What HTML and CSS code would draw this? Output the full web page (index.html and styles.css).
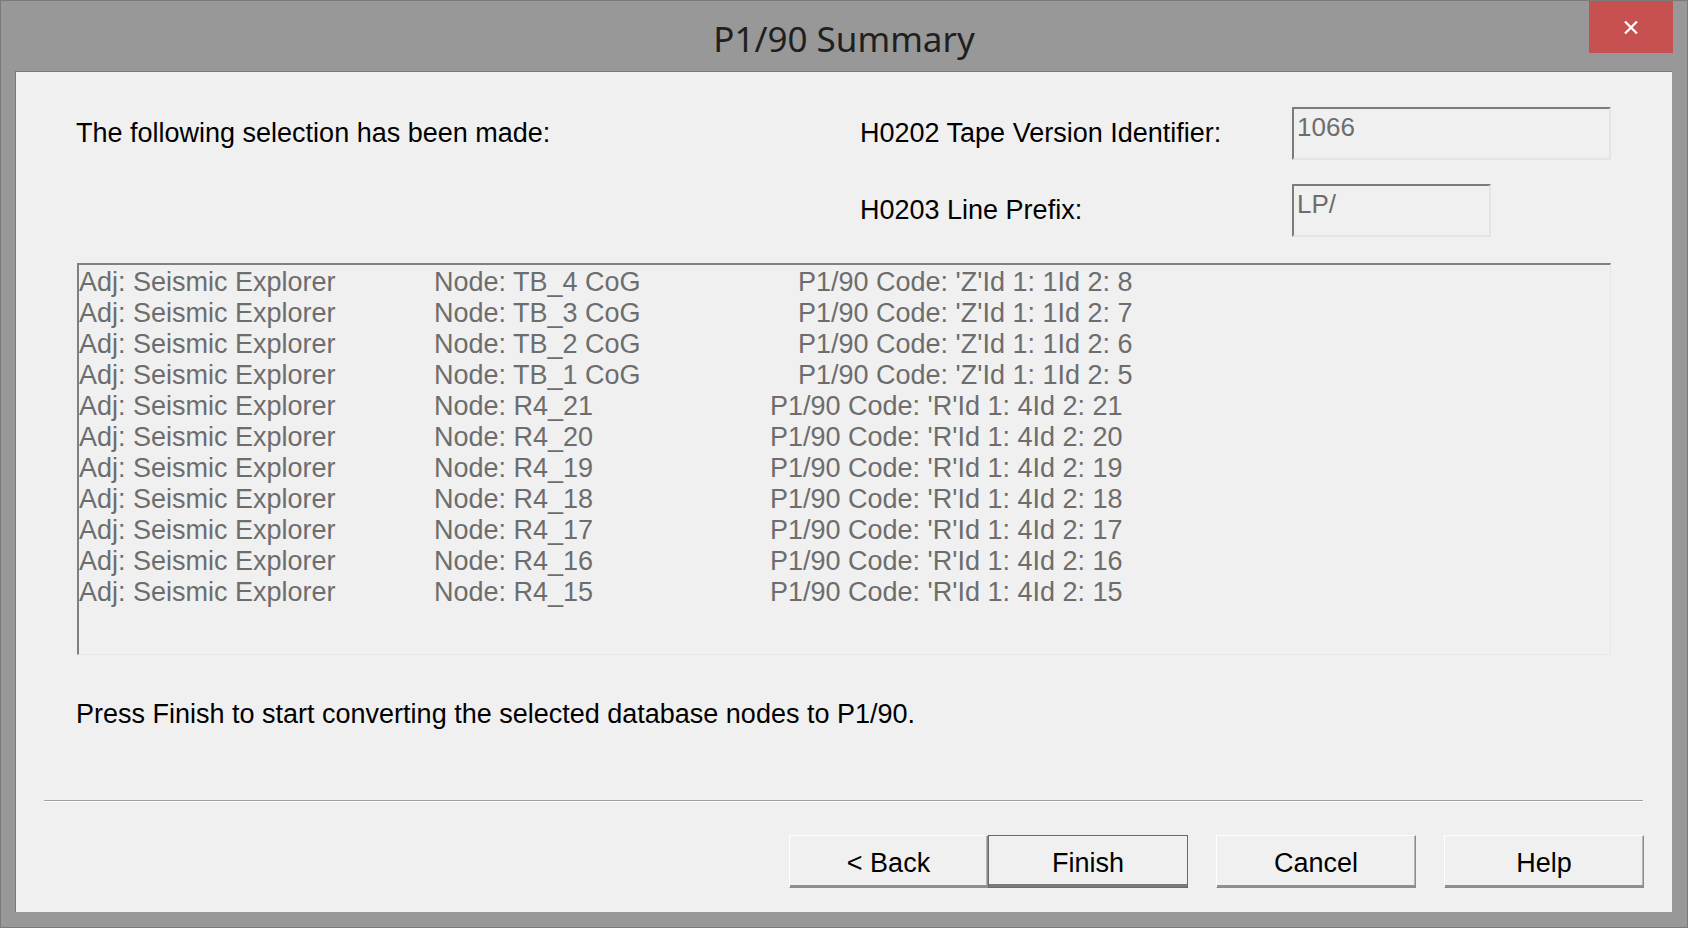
FILE: index.html
```html
<!DOCTYPE html>
<html lang="en">
<head>
    <meta charset="UTF-8">
    <meta name="viewport" content="width=device-width, initial-scale=1.0">
    <title>P1/90 Summary</title>
    <link rel="stylesheet" href="styles.css">
</head>
<body>
    <div class="window">
        <div class="titlebar">
            <div></div>
            <div class="title">P1/90 Summary</div>
            <button class="close" aria-label="Close">
                <svg width="14" height="13" viewBox="0 0 14 13">
                    <path d="M1 0.5 L13 12.5 M13 0.5 L1 12.5" stroke="#fff" stroke-width="2.2" fill="none"/>
                </svg>
            </button>
        </div>

        <div class="client">
            <div class="summary">
                <div class="intro">The following selection has been made:</div>
                <div class="field-label">H0202 Tape Version Identifier:</div>
                <div class="field-box wide">1066</div>
                <div class="field-label">H0203 Line Prefix:</div>
                <div class="field-box narrow">LP/</div>
            </div>

            <div class="listbox">
                <div class="row"><span>Adj: Seismic Explorer</span><span>Node: TB_4 CoG</span><span class="code-z">P1/90 Code: 'Z'Id 1: 1Id 2: 8</span></div>
                <div class="row"><span>Adj: Seismic Explorer</span><span>Node: TB_3 CoG</span><span class="code-z">P1/90 Code: 'Z'Id 1: 1Id 2: 7</span></div>
                <div class="row"><span>Adj: Seismic Explorer</span><span>Node: TB_2 CoG</span><span class="code-z">P1/90 Code: 'Z'Id 1: 1Id 2: 6</span></div>
                <div class="row"><span>Adj: Seismic Explorer</span><span>Node: TB_1 CoG</span><span class="code-z">P1/90 Code: 'Z'Id 1: 1Id 2: 5</span></div>
                <div class="row"><span>Adj: Seismic Explorer</span><span>Node: R4_21</span><span>P1/90 Code: 'R'Id 1: 4Id 2: 21</span></div>
                <div class="row"><span>Adj: Seismic Explorer</span><span>Node: R4_20</span><span>P1/90 Code: 'R'Id 1: 4Id 2: 20</span></div>
                <div class="row"><span>Adj: Seismic Explorer</span><span>Node: R4_19</span><span>P1/90 Code: 'R'Id 1: 4Id 2: 19</span></div>
                <div class="row"><span>Adj: Seismic Explorer</span><span>Node: R4_18</span><span>P1/90 Code: 'R'Id 1: 4Id 2: 18</span></div>
                <div class="row"><span>Adj: Seismic Explorer</span><span>Node: R4_17</span><span>P1/90 Code: 'R'Id 1: 4Id 2: 17</span></div>
                <div class="row"><span>Adj: Seismic Explorer</span><span>Node: R4_16</span><span>P1/90 Code: 'R'Id 1: 4Id 2: 16</span></div>
                <div class="row"><span>Adj: Seismic Explorer</span><span>Node: R4_15</span><span>P1/90 Code: 'R'Id 1: 4Id 2: 15</span></div>
            </div>

            <div class="note">Press Finish to start converting the selected database nodes to P1/90.</div>

            <div class="separator"></div>

            <div class="buttons">
                <div class="nav">
                    <button class="btn back">&lt; Back</button>
                    <button class="btn default">Finish</button>
                </div>
                <button class="btn">Cancel</button>
                <button class="btn">Help</button>
            </div>
        </div>
    </div>
</body>
</html>
```

FILE: styles.css
```css
body {
    margin: 0;
    background-color: #989898;
    font-family: "Liberation Sans", Arial, sans-serif;
}

.window {
    width: 1688px;
    height: 928px;
    box-sizing: border-box;
    border: 1px solid #7a7a7a;
    background-color: #989898;
    display: flex;
    flex-direction: column;
    padding: 0 15px 15px 14px;
}

/* Title bar */
.titlebar {
    height: 70px;
    margin: 0 -15px 0 -14px;
    padding: 0 14px;
    display: grid;
    grid-template-columns: 1fr auto 1fr;
}

.title {
    font-family: "Noto Sans", sans-serif;
    font-size: 35px;
    line-height: 43px;
    padding-top: 16px;
    color: #1f1f1f;
    white-space: nowrap;
}

.close {
    justify-self: end;
    align-self: start;
    width: 84px;
    height: 52px;
    border: none;
    padding: 0;
    background-color: #c75050;
    display: flex;
    align-items: center;
    justify-content: center;
}

/* Client area */
.client {
    flex: 1;
    background-color: #f0f0f0;
    border-top: 1px solid #7a7a7a;
    border-left: 1px solid #7a7a7a;
    display: flex;
    flex-direction: column;
    font-size: 27px;
    line-height: 31px;
}

.summary {
    display: grid;
    grid-template-columns: 784px 432px auto;
    grid-auto-rows: 53px;
    row-gap: 24px;
    margin: 35px 0 0 60px;
    align-items: center;
    color: #000;
}

.intro {
    grid-column: 1;
}

.field-label {
    grid-column: 2;
}

.field-box {
    grid-column: 3;
    align-self: stretch;
    box-sizing: border-box;
    border: 2px solid;
    border-color: #7c7c7c #e4e4e4 #e4e4e4 #7c7c7c;
    padding: 3px 3px;
    font-size: 26px;
    line-height: 30px;
    color: #6d6d6d;
}

.field-box.wide {
    width: 319px;
}

.field-box.narrow {
    width: 199px;
}

/* Selection list */
.listbox {
    margin: 26px 0 0 61px;
    width: 1534px;
    height: 392px;
    box-sizing: border-box;
    border-style: solid;
    border-width: 2px 1px 1px 2px;
    border-color: #808080 #e6e6e6 #e6e6e6 #808080;
    padding-top: 2px;
    color: #6d6d6d;
}

.row {
    display: grid;
    grid-template-columns: 355px 336px auto;
    white-space: nowrap;
}

.code-z {
    padding-left: 28px;
}

.note {
    margin: 44px 0 0 60px;
    color: #000;
}

.separator {
    margin: 70px 29px 0 28px;
    height: 1px;
    background-color: #a0a0a0;
    border-bottom: 1px solid #fff;
}

/* Buttons */
.buttons {
    display: flex;
    justify-content: flex-end;
    gap: 28px;
    margin: 33px 28px 0 0;
}

.nav {
    display: flex;
}

.btn {
    width: 200px;
    height: 53px;
    box-sizing: border-box;
    font: inherit;
    color: #000;
    background-color: #f0f0f0;
    border: 1px solid;
    border-color: #fff #8c8c8c #8c8c8c #fff;
    box-shadow: inset 0 -2px 0 #8f8f8f, inset -1px 0 0 #b4b4b4;
    padding: 3px 0 0;
}

.btn.back {
    width: 199px;
}

.btn.default {
    border-color: #6a6a6a;
    box-shadow: inset 0 -3px 0 #7a7a7a;
}
```
